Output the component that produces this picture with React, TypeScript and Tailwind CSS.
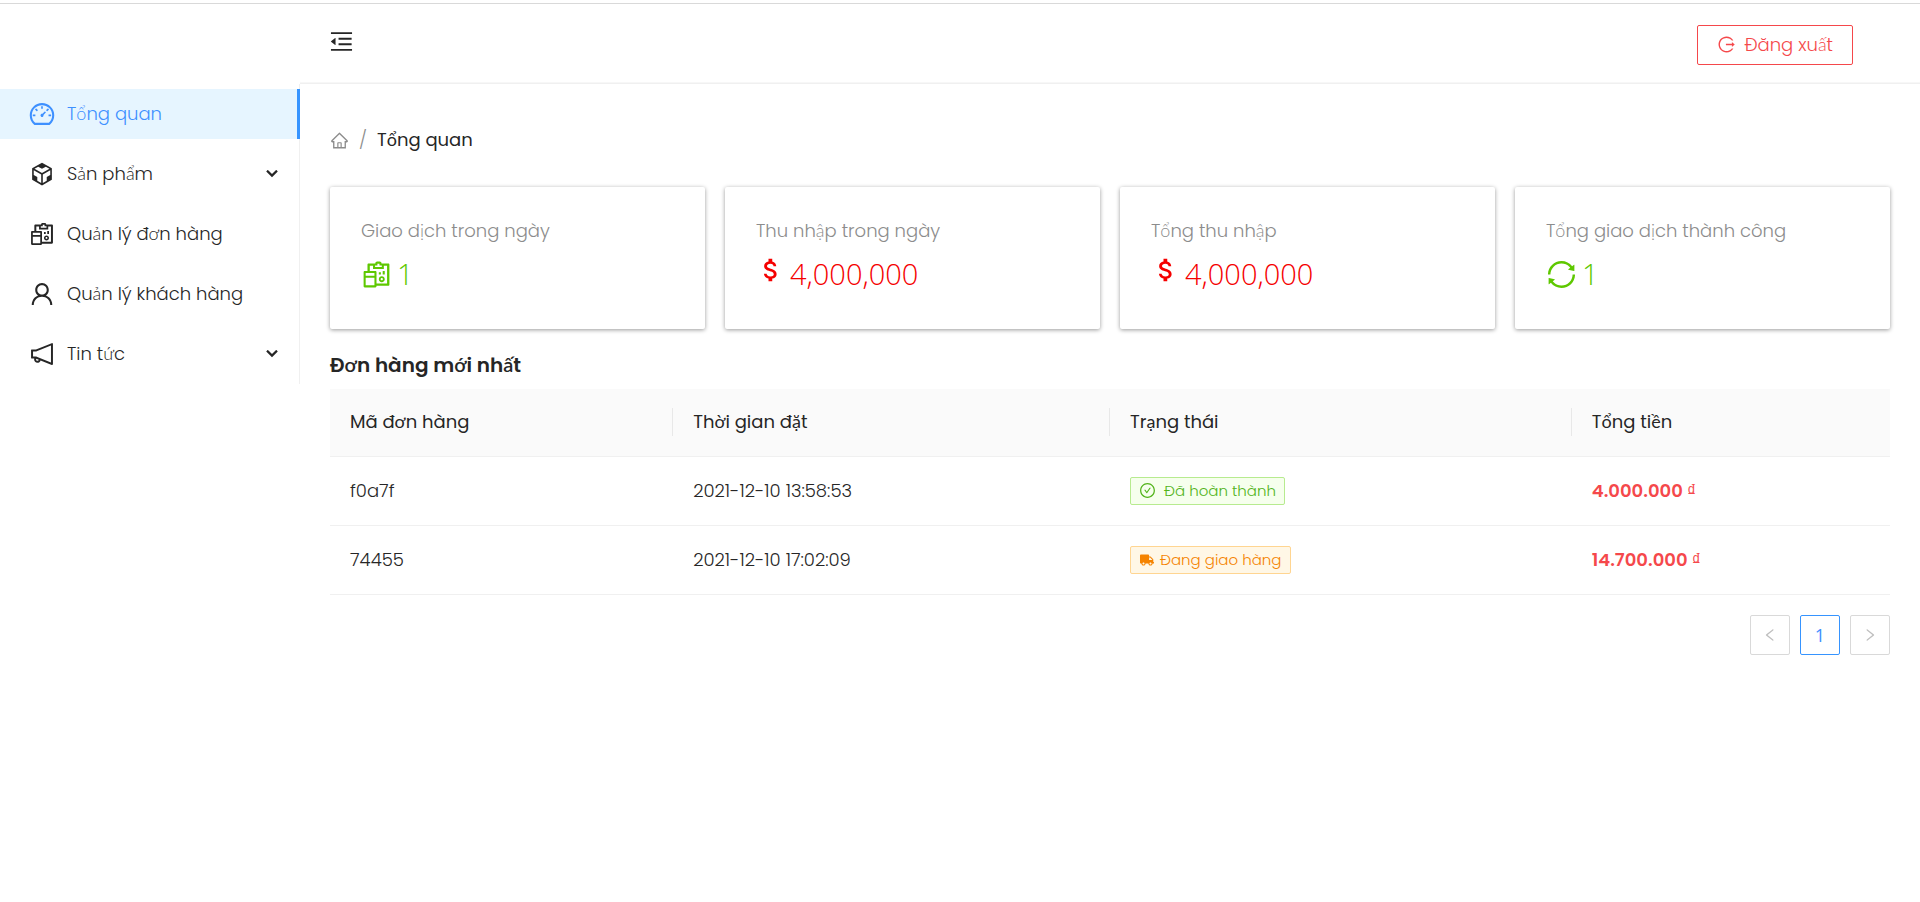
import React from "react";
import {
  AiOutlineCheckCircle,
  AiOutlineCodeSandbox,
  AiOutlineDashboard,
  AiOutlineHome,
  AiOutlineLeft,
  AiOutlineLogout,
  AiOutlineMenuFold,
  AiOutlineNotification,
  AiOutlineReconciliation,
  AiOutlineRight,
  AiOutlineSync,
  AiOutlineUser,
} from "react-icons/ai";
import { FaTruck } from "react-icons/fa";
import { MdAttachMoney } from "react-icons/md";

const menu = [
  { label: "Tổng quan", icon: AiOutlineDashboard, active: true },
  { label: "Sản phẩm", icon: AiOutlineCodeSandbox, sub: true },
  { label: "Quản lý đơn hàng", icon: AiOutlineReconciliation },
  { label: "Quản lý khách hàng", icon: AiOutlineUser },
  { label: "Tin tức", icon: AiOutlineNotification, sub: true },
];

const stats = [
  { label: "Giao dịch trong ngày", value: "1", icon: AiOutlineReconciliation },
  { label: "Thu nhập trong ngày", value: "4,000,000", icon: MdAttachMoney, money: true },
  { label: "Tổng thu nhập", value: "4,000,000", icon: MdAttachMoney, money: true },
  { label: "Tổng giao dịch thành công", value: "1", icon: AiOutlineSync },
];

const columns = [
  { title: "Mã đơn hàng", width: "w-[22%]" },
  { title: "Thời gian đặt", width: "w-[28%]" },
  { title: "Trạng thái", width: "w-[29.6%]" },
  { title: "Tổng tiền", width: "" },
];

const orders = [
  { id: "f0a7f", time: "2021-12-10 13:58:53", done: true, total: "4.000.000" },
  { id: "74455", time: "2021-12-10 17:02:09", done: false, total: "14.700.000" },
];

function Chevron() {
  return (
    <svg viewBox="0 0 12 8" className="h-2 w-3" fill="none" stroke="currentColor" strokeWidth="2.2" aria-hidden="true">
      <path d="M1 .6 6 5.6 11 .6" />
    </svg>
  );
}

function Status({ done }: { done: boolean }) {
  return done ? (
    <span className="flex h-7 w-fit items-center gap-2 rounded-xs border border-[#b7eb8f] bg-[#f6ffed] px-2 text-[15px] text-[#52b41a]">
      <AiOutlineCheckCircle className="size-[17px]" />
      Đã hoàn thành
    </span>
  ) : (
    <span className="flex h-7 w-fit items-center gap-1.5 rounded-xs border border-[#ffd591] bg-[#fff7e6] px-[9px] text-[15px] text-[#f58300]">
      <FaTruck className="size-[14px]" />
      Đang giao hàng
    </span>
  );
}

export default function App() {
  return (
    <div className="min-h-screen bg-white pt-[3px] font-['Poppins','Lato',sans-serif] text-lg font-light text-[#262626]">
      <div className="flex items-start border-t border-[#d9d9d9]">
        <aside className="w-[300px] shrink-0 pt-20">
          <nav className="flex flex-col gap-2.5 border-r border-[#f0f0f0] py-[5px]">
            {menu.map((m) => (
              <a
                key={m.label}
                href="#"
                className={
                  m.active
                    ? "-mr-px flex h-[50px] items-center gap-[11px] border-r-3 border-[#3694ff] bg-[#e6f5ff] pr-5 pl-7 text-[#3e90ff]"
                    : "flex h-[50px] items-center gap-[11px] pr-[21px] pl-7"
                }
              >
                <m.icon className="size-7" />
                <span className="grow">{m.label}</span>
                {m.sub && <Chevron />}
              </a>
            ))}
          </nav>
        </aside>
        <div className="min-w-0 grow">
          <header className="flex h-20 items-center justify-between border-b border-[#f0f0f0] pr-[67px] pl-7 shadow-[0_-1px_1px_#f7f7f7_inset]">
            <button aria-label="Menu" className="mb-1">
              <AiOutlineMenuFold className="size-[27px]" />
            </button>
            <button className="mt-0.5 flex h-10 items-center gap-2 rounded-xs border border-[#f5484b] px-[19px] text-[#f5484b]">
              <AiOutlineLogout className="size-[19px]" />
              Đăng xuất
            </button>
          </header>
          <main className="px-[30px] pt-11">
            <nav aria-label="Breadcrumb" className="flex h-6 items-center gap-2.5">
              <a href="#" aria-label="Home" className="text-[#8c8c8c]">
                <AiOutlineHome className="size-[19px]" />
              </a>
              <span className="text-[#8c8c8c]">/</span>
              <span className="font-normal">Tổng quan</span>
            </nav>
            <section className="mt-[35px] grid grid-cols-4 gap-5">
              {stats.map((s) => (
                <div
                  key={s.label}
                  className="h-[142px] rounded-xs px-[31px] pt-[30px] shadow-[0_1px_4px_rgba(0,0,0,0.4)]"
                >
                  <div className="text-[#8c8c8c]">{s.label}</div>
                  <div
                    className={
                      s.money
                        ? "mt-[9px] flex h-10 items-center gap-1 font-['Open_Sans',sans-serif] text-[29px] text-[#f50000]"
                        : "mt-[9px] flex h-10 items-center gap-1 font-['Open_Sans',sans-serif] text-[29px] text-[#5ec800]"
                    }
                  >
                    <s.icon className={s.money ? "mb-2 size-[30px]" : "-ml-px size-[33px]"} />
                    {s.value}
                  </div>
                </div>
              ))}
            </section>
            <h2 className="mt-5 text-xl leading-8 font-semibold">Đơn hàng mới nhất</h2>
            <table className="mt-2 w-full table-fixed text-left">
              <thead className="bg-[#fafafa]">
                <tr className="h-[67px] border-b border-[#f0f0f0]">
                  {columns.map((c, i) => (
                    <th key={c.title} className={`p-0 font-normal ${c.width}`}>
                      <div
                        className={
                          i < columns.length - 1
                            ? "flex h-7 items-center border-r border-[#e8e8e8] px-5"
                            : "flex h-7 items-center px-5"
                        }
                      >
                        {c.title}
                      </div>
                    </th>
                  ))}
                </tr>
              </thead>
              <tbody>
                {orders.map((o) => (
                  <tr key={o.id} className="h-[69px] border-b border-[#f0f0f0]">
                    <td className="px-5">{o.id}</td>
                    <td className="px-5">{o.time}</td>
                    <td className="px-5">
                      <Status done={o.done} />
                    </td>
                    <td className="px-5 font-semibold text-[#f5484b]">
                      {o.total} <span className="font-['Liberation_Sans',sans-serif] leading-none font-normal">₫</span>
                    </td>
                  </tr>
                ))}
              </tbody>
            </table>
            <div className="mt-5 flex justify-end gap-2.5">
              <button
                aria-label="Previous"
                className="grid size-10 place-items-center rounded-xs border border-[#d9d9d9] text-[#bfbfbf]"
              >
                <AiOutlineLeft className="size-4" />
              </button>
              <button className="grid size-10 place-items-center rounded-xs border border-[#3694ff] font-['Open_Sans',sans-serif] font-medium text-[#3e90ff]">
                1
              </button>
              <button
                aria-label="Next"
                className="grid size-10 place-items-center rounded-xs border border-[#d9d9d9] text-[#bfbfbf]"
              >
                <AiOutlineRight className="size-4" />
              </button>
            </div>
          </main>
        </div>
      </div>
    </div>
  );
}
